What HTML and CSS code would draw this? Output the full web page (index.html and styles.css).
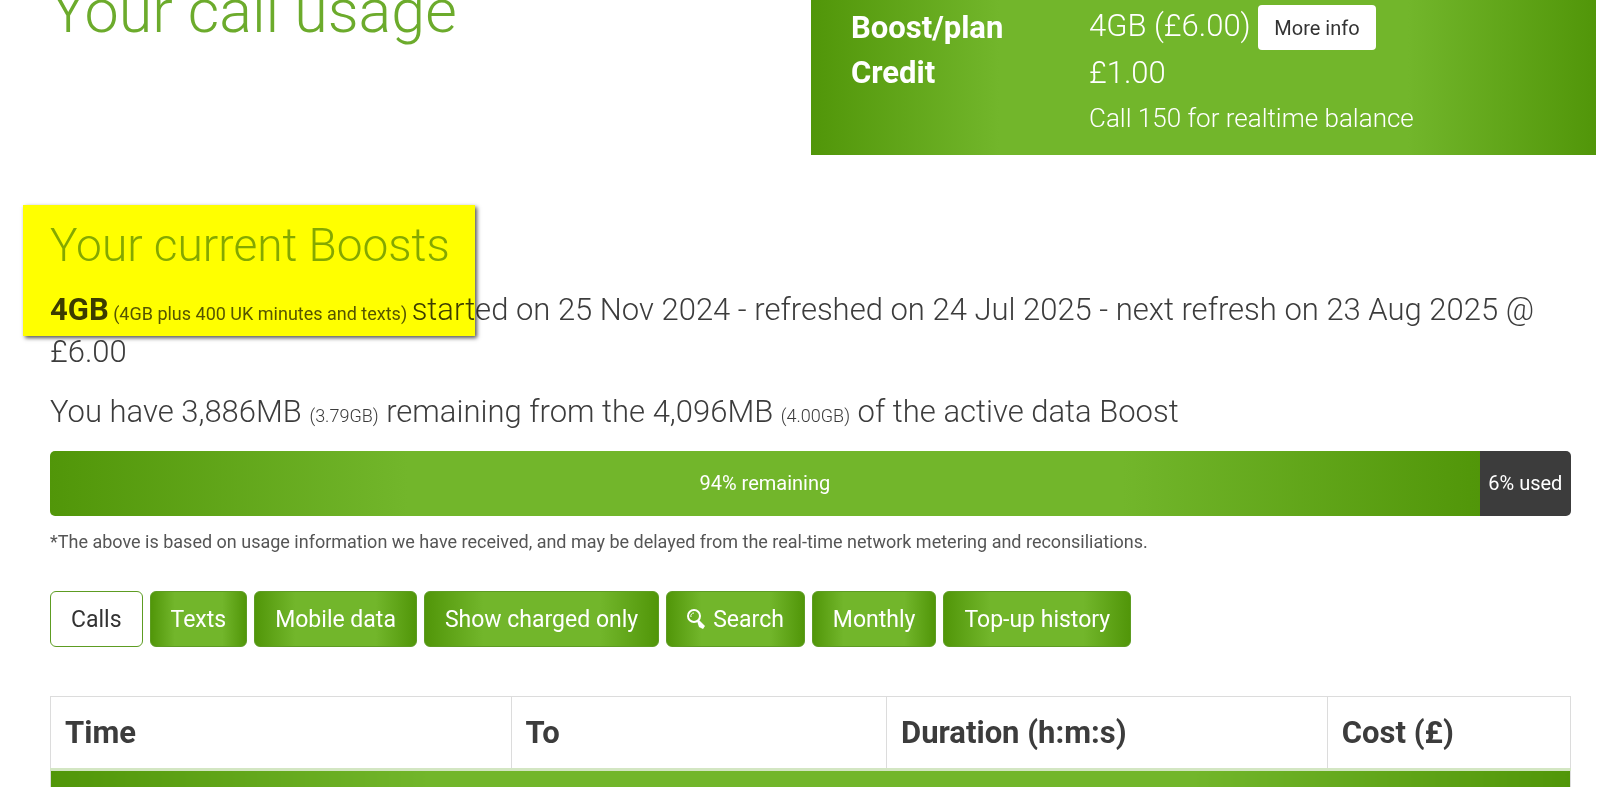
FILE: index.html
```html
<!DOCTYPE html>
<html lang="en">
<head>
    <meta charset="UTF-8">
    <meta name="viewport" content="width=device-width, initial-scale=1.0">
    <title>Your call usage</title>
    <link rel="stylesheet" href="styles.css">
</head>
<body>
    <header class="top">
        <h1>Your call usage</h1>
        <dl class="account">
            <dt>Boost/plan</dt>
            <dd>4GB (£6.00) <button type="button" class="btn-info">More info</button></dd>
            <dt>Credit</dt>
            <dd>£1.00</dd>
            <dd class="note">Call 150 for realtime balance</dd>
        </dl>
    </header>

    <main>
        <section class="boosts">
            <h2>Your current Boosts</h2>
            <p><strong>4GB</strong><small class="plan"> (4GB plus 400 UK minutes and texts) </small>started on 25 Nov 2024 - refreshed on 24 Jul 2025 - next refresh on 23 Aug 2025 @ £6.00</p>
            <p>You have 3,886MB <small>(3.79GB)</small> remaining from the 4,096MB <small>(4.00GB)</small> of the active data Boost</p>
            <div class="progress">
                <div class="remaining" style="width: 94%">94% remaining</div>
                <div class="used">6% used</div>
            </div>
            <p class="footnote">*The above is based on usage information we have received, and may be delayed from the real-time network metering and reconsiliations.</p>
        </section>

        <nav class="filters">
            <button type="button" class="btn active">Calls</button>
            <button type="button" class="btn">Texts</button>
            <button type="button" class="btn">Mobile data</button>
            <button type="button" class="btn">Show charged only</button>
            <button type="button" class="btn">
                <svg class="icon" viewBox="0 0 18 20" aria-hidden="true">
                    <circle cx="7" cy="7" r="6" fill="none" stroke="currentColor" stroke-width="2"/>
                    <path d="M4 8a3 3 0 0 1 3-4" fill="none" stroke="currentColor"/>
                    <path d="M10 12l2-1 6 6-2 3-4-2z" fill="currentColor"/>
                </svg>
                Search
            </button>
            <button type="button" class="btn">Monthly</button>
            <button type="button" class="btn">Top-up history</button>
        </nav>

        <table class="calls">
            <thead>
                <tr>
                    <th class="col-time">Time</th>
                    <th class="col-to">To</th>
                    <th class="col-duration">Duration (h:m:s)</th>
                    <th class="col-cost">Cost (£)</th>
                </tr>
            </thead>
            <tbody>
                <tr>
                    <td colspan="4"></td>
                </tr>
            </tbody>
        </table>
    </main>
</body>
</html>
```
FILE: styles.css
```css
* {
    box-sizing: border-box;
}

body {
    margin: 0;
    font-family: Roboto, Arial, sans-serif;
    font-size: 31px;
    font-weight: 300;
    line-height: 42px;
    color: #3c3c3c;
    background-color: #fff;
    overflow: hidden;
}

h1, h2, p, dl, dd {
    margin: 0;
}

h1, h2 {
    font-weight: 300;
    color: #6cab2c;
}

.top {
    display: flex;
    height: 155px;
    padding: 0 4px 0 50px;
}

h1 {
    flex: 1;
    font-size: 61px;
    line-height: 22px;
}

.account {
    width: 51%;
    max-width: 785px;
    display: grid;
    grid-template-columns: 238px 1fr;
    grid-auto-rows: 45px;
    align-items: center;
    padding: 5px 40px 15px;
    color: #fff;
    background: linear-gradient(90deg, #519609 0%, #72b62b 24%, #72b62b 76%, #519609 100%);
}

.account dt {
    font-weight: 700;
}

.account .note {
    grid-column: 2;
    font-size: 26px;
}

.btn-info {
    height: 45px;
    padding: 0 16px;
    border: 0;
    border-radius: 4px;
    font-family: inherit;
    font-size: 20px;
    vertical-align: middle;
    color: #333;
    background-color: #fff;
}

main {
    padding: 50px 29px 0 50px;
}

.boosts {
    position: relative;
}

/* marker over the boost name */
.boosts::before {
    content: "";
    position: absolute;
    left: -27px;
    top: 0;
    width: 452px;
    height: 131px;
    background-color: #ff0;
    box-shadow: 2px 2px 4px #555;
    mix-blend-mode: multiply;
}

h2 {
    padding: 15px 0 19px;
    font-size: 46px;
    line-height: 50px;
    color: #84a82c;
}

.boosts p {
    margin-bottom: 18px;
}

strong {
    font-weight: 700;
}

small {
    font-size: 18px;
    line-height: 1;
}

.plan {
    font-weight: 400;
    color: #555;
}

.progress {
    display: flex;
    height: 65px;
    border-radius: 5px;
    overflow: hidden;
    font-size: 20px;
    font-weight: 400;
    line-height: 65px;
    text-align: center;
    color: #fff;
}

.remaining {
    background: linear-gradient(90deg, #519609 0%, #72b62b 25%, #72b62b 75%, #519609 100%);
}

.used {
    flex: 1;
    background-color: #3c3c3c;
}

.boosts .footnote {
    margin: 10px 0 0;
    font-size: 18px;
    font-weight: 400;
    line-height: 32px;
    color: #555;
}

.filters {
    display: flex;
    gap: 7px;
    margin-top: 33px;
}

.btn {
    display: flex;
    align-items: center;
    gap: 8px;
    height: 56px;
    padding: 0 20px;
    border: 1px solid #5d9c22;
    border-radius: 6px;
    font-family: inherit;
    font-size: 23px;
    color: #fff;
    background: linear-gradient(90deg, #519609 0%, #72b62b 25%, #72b62b 75%, #519609 100%);
}

.btn.active {
    color: #333;
    background: #fff;
}

.icon {
    width: 18px;
    height: 20px;
}

.calls {
    width: 100%;
    margin-top: 49px;
    border-collapse: collapse;
    table-layout: fixed;
}

.calls th {
    height: 73px;
    padding: 0 14px;
    border: 1px solid #dcdcdc;
    border-bottom: 3px solid #d3e6c3;
    font-weight: 700;
    text-align: left;
}

.calls td {
    height: 73px;
    border: 1px solid #dcdcdc;
    background: linear-gradient(90deg, #519609 0%, #72b62b 25%, #72b62b 75%, #519609 100%);
}

.col-time {
    width: 30.3%;
}

.col-to {
    width: 24.7%;
}

.col-duration {
    width: 29%;
}

.col-cost {
    width: 16%;
}
```
